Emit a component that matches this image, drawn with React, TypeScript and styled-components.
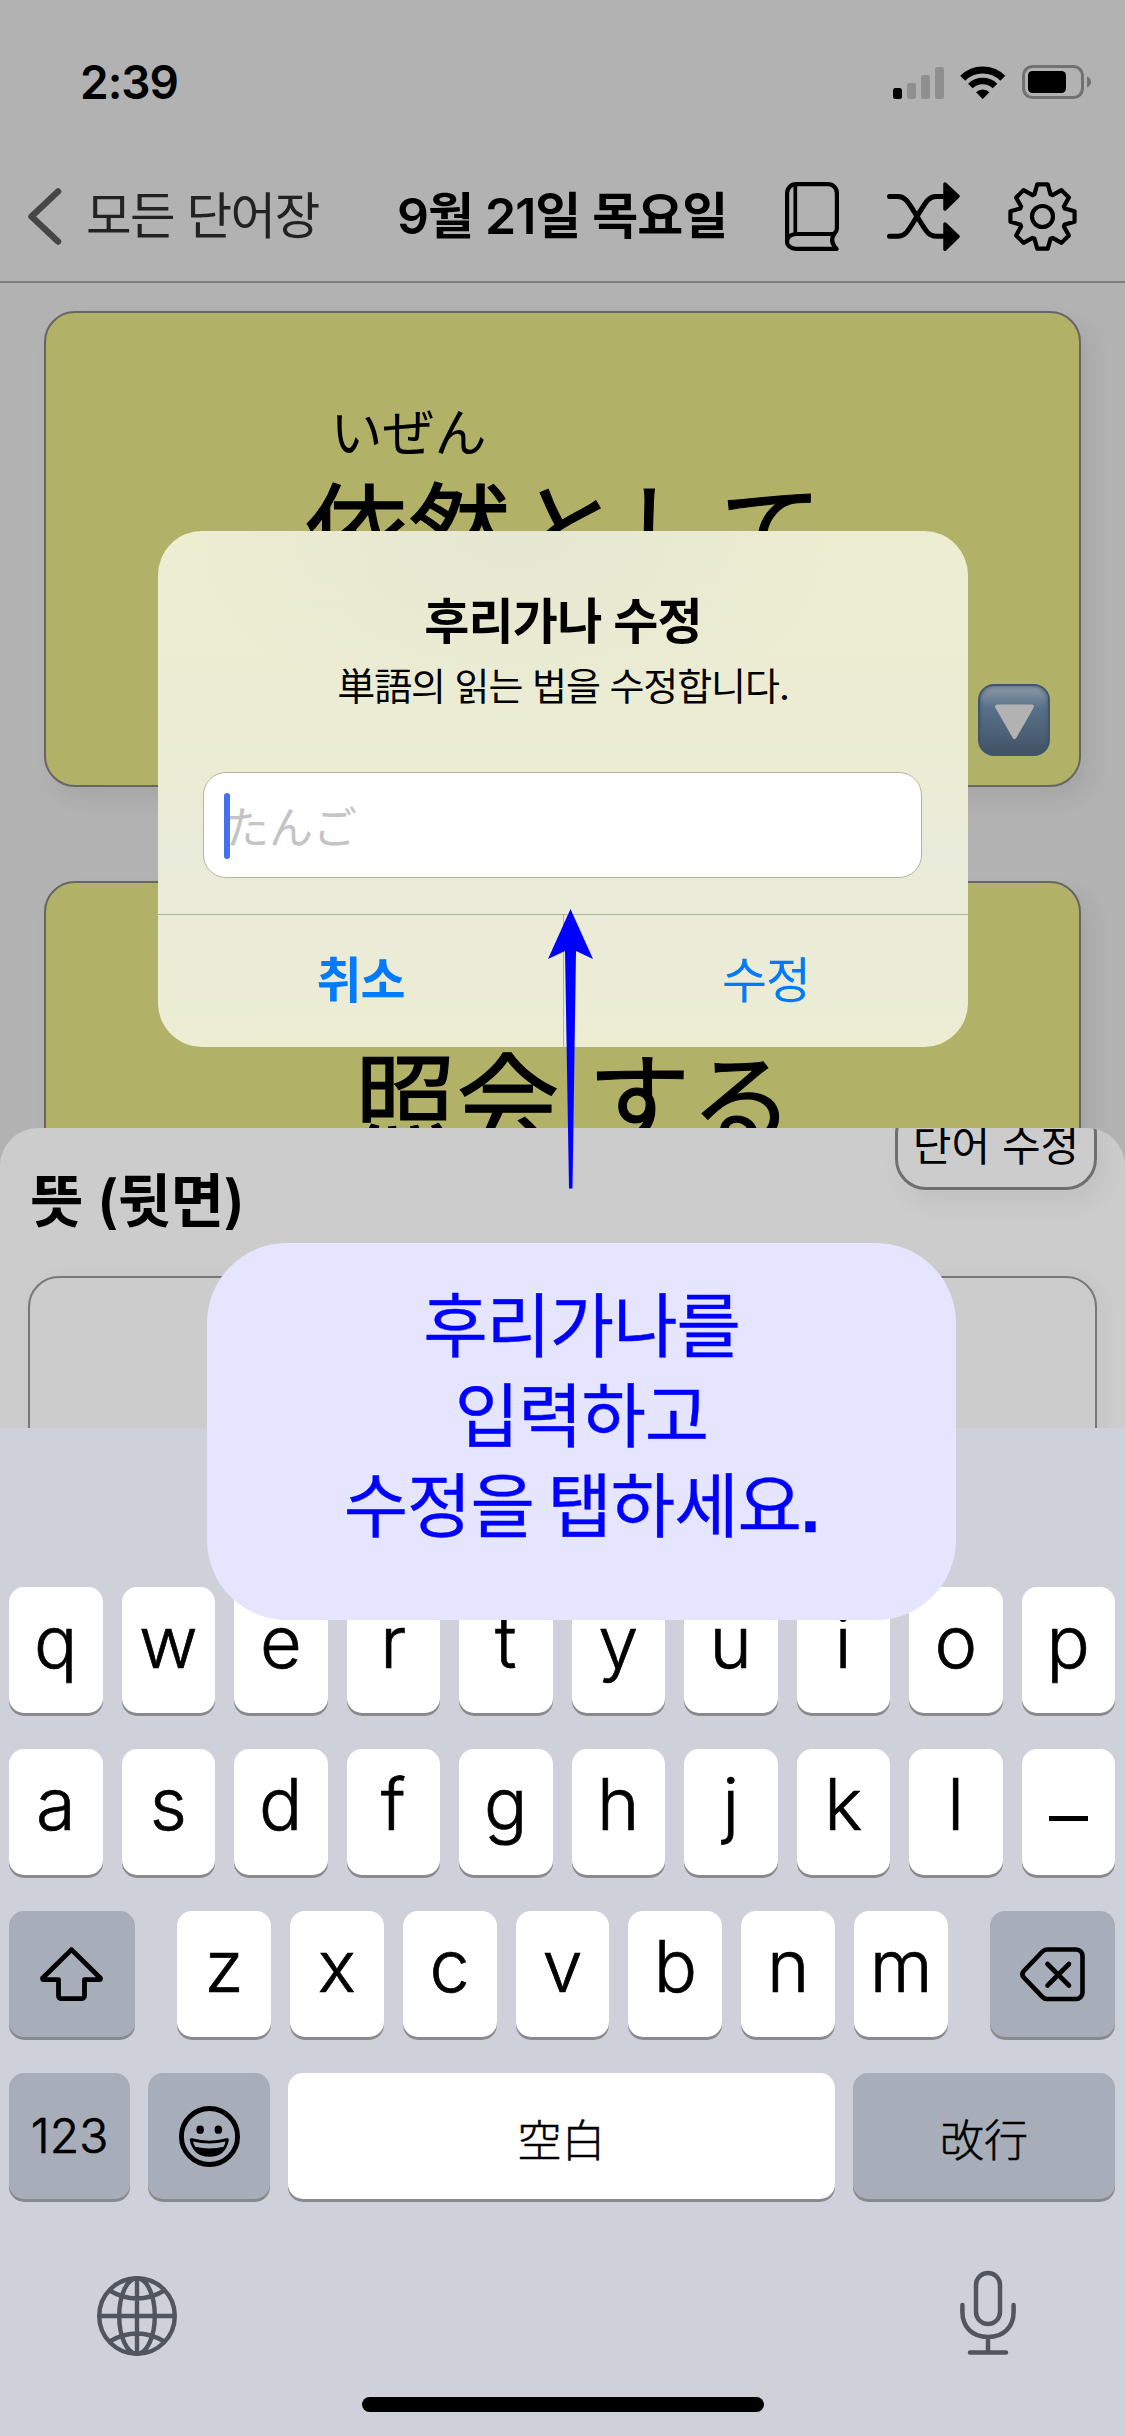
import React from "react";
import styled, { createGlobalStyle } from "styled-components";

const KR = `Inter, "Noto Sans CJK KR", sans-serif`;
const JP = `"Noto Sans CJK JP", sans-serif`;

const GlobalStyle = createGlobalStyle`
  *, *::before, *::after { box-sizing: border-box; }
  body { margin: 0; background: #b2b2b2; }
`;

const Screen = styled.main`
  position: relative;
  display: flex;
  flex-direction: column;
  width: 1125px;
  height: 2436px;
  overflow: hidden;
  background: #b2b2b2;
  color: #000;
  font-family: ${KR};
  white-space: nowrap;
`;

const StatusBar = styled.header`
  display: flex;
  align-items: center;
  justify-content: space-between;
  height: 164px;
  padding: 0 34px 0 80px;
`;

const Clock = styled.span`
  font-size: 46px;
  font-weight: 600;
  line-height: 56px;
  letter-spacing: -1px;
`;

const StatusIcons = styled.div`
  display: flex;
  align-items: center;
  gap: 16px;
`;

const NavBar = styled.nav`
  display: flex;
  align-items: center;
  height: 119px;
  padding: 0 48px 13px 28px;
  border-bottom: 2px solid #7f7f7f;
`;

const BackButton = styled.div`
  display: flex;
  align-items: center;
  gap: 24px;
  width: 369px;
  font-size: 49.5px;
  line-height: 60px;
  letter-spacing: -0.03em;
  color: #222;
`;

const NavTitle = styled.h1`
  flex: 1;
  margin: 0;
  font-size: 50px;
  font-weight: 600;
  line-height: 60px;
  letter-spacing: -0.018em;
`;

const NavActions = styled.div`
  display: flex;
  align-items: center;
  gap: 48px;
`;

const CardList = styled.section`
  display: flex;
  flex-direction: column;
  gap: 94px;
  height: 845px;
  padding: 28px 44px 0;
  overflow: hidden;
`;

const Card = styled.article`
  position: relative;
  display: flex;
  flex: none;
  justify-content: center;
  align-items: flex-start;
  height: 476px;
  padding-top: 87px;
  border: 2px solid #666664;
  border-radius: 31px;
  background: #b1b168;
  box-shadow: 10px 12px 22px rgba(0, 0, 0, 0.07);
`;

const Word = styled.div<{ $gap: number; $shift: number }>`
  display: flex;
  align-items: flex-end;
  gap: ${(p) => p.$gap}px;
  margin-left: ${(p) => p.$shift}px;
  font-family: ${JP};
  font-size: 103px;
  line-height: 103px;
  font-weight: 400;
`;

const Ruby = styled.div`
  display: flex;
  flex-direction: column;
  align-items: center;
`;

const Reading = styled.span`
  height: 60px;
  margin-bottom: 14px;
  font-size: 52px;
  line-height: 60px;
`;

const Base = styled.span`
  -webkit-text-stroke: 1px #000;
`;

const FlipButton = styled.div`
  position: absolute;
  right: 29px;
  bottom: 29px;
  display: flex;
  width: 72px;
  height: 72px;
  border: 2px solid #3f566e;
  border-radius: 16px;
  background: linear-gradient(#8d98a2 0%, #77899a 14%, #587089 32%, #50657c 60%, #425265 100%);
  box-shadow: inset 0 0 4px #3f5870;
`;

const SheetArea = styled.section`
  height: 300px;
  background: #b2b2b2;
`;

const Sheet = styled.div`
  height: 300px;
  padding: 0 28px;
  overflow: hidden;
  border-radius: 38px 38px 0 0;
  background: #ccc;
`;

const SheetHeader = styled.div`
  display: flex;
  justify-content: space-between;
  align-items: flex-start;
  height: 148px;
`;

const SheetTitle = styled.h2`
  margin: 43px 0 0 2px;
  font-size: 58px;
  font-weight: 600;
  line-height: 60px;
  letter-spacing: -0.01em;
`;

const EditButton = styled.div`
  width: 202px;
  height: 87px;
  margin-top: -25px;
  border: 3px solid #6d6e70;
  border-radius: 31px;
  font-size: 42px;
  line-height: 80px;
  text-align: center;
  box-shadow: 8px 14px 24px rgba(0, 0, 0, 0.05);
`;

const MeaningBox = styled.div`
  height: 220px;
  border: 2px solid #77787a;
  border-radius: 31px;
  box-shadow: 6px 0 18px rgba(0, 0, 0, 0.04);
`;

const Keyboard = styled.section`
  display: flex;
  flex: 1;
  flex-direction: column;
  padding-top: 159px;
  background: #cfd1da;
`;

const KeyRows = styled.div`
  display: flex;
  flex-direction: column;
  gap: 36px;
  padding: 0 10px 0 9px;
`;

const KeyRow = styled.div<{ $gap?: number }>`
  display: flex;
  gap: ${(p) => p.$gap ?? 19}px;
`;

const LetterGroup = styled.div`
  display: flex;
  flex: 1;
  gap: 19px;
  margin: 0 23px;
`;

const Key = styled.div<{ $tone?: "light" | "dark"; $width?: number }>`
  display: flex;
  align-items: center;
  justify-content: center;
  flex: ${(p) => (p.$width ? `0 0 ${p.$width}px` : "1 1 0")};
  height: 126px;
  border-radius: 15px;
  background: ${(p) => (p.$tone === "dark" ? "#a7adb9" : "#fff")};
  box-shadow: 0 3px 0 #898a8e;
`;

const Letter = styled.span`
  padding-bottom: 16px;
  font-size: 72px;
  font-weight: 300;
  line-height: 80px;
  -webkit-text-stroke: 0.7px #000;
`;

const LongDash = styled.span`
  width: 39px;
  height: 5px;
  margin-top: 12px;
  background: #000;
`;

const NumericLabel = styled.span`
  font-size: 48px;
  font-weight: 300;
  line-height: 60px;
  -webkit-text-stroke: 0.7px #000;
`;

const KanaLabel = styled.span`
  padding-top: 4px;
  font-family: ${JP};
  font-size: 44px;
  font-weight: 300;
  line-height: 60px;
  -webkit-text-stroke: 0.5px #000;
`;

const KeyboardFooter = styled.div`
  display: flex;
  align-items: flex-end;
  justify-content: space-between;
  height: 86px;
  margin-top: 71px;
  padding: 0 109px 0 97px;
`;

const HomeIndicator = styled.div`
  width: 402px;
  height: 15px;
  margin: 41px 0 0 362px;
  border-radius: 8px;
  background: #000;
`;

const Dialog = styled.div`
  position: absolute;
  left: 158px;
  top: 531px;
  display: flex;
  flex-direction: column;
  width: 810px;
  height: 516px;
  overflow: hidden;
  border-radius: 44px;
  background:
    radial-gradient(ellipse 330px 190px at 44% 0%, #e5e7d2, rgba(229, 231, 210, 0)),
    linear-gradient(#ecedd1 0%, #ebecd4 45%, #e9ebda 62%, #ebebd8 78%, #ecedd3 100%);
  text-align: center;
`;

const DialogTitle = styled.h2`
  flex: none;
  margin: 61px 0 0;
  font-size: 49px;
  font-weight: 600;
  line-height: 60px;
  letter-spacing: -0.015em;
`;

const DialogMessage = styled.p`
  flex: none;
  margin: 9px 0 0;
  font-size: 38px;
  line-height: 50px;
  letter-spacing: -0.028em;
`;

const TextField = styled.div`
  display: flex;
  flex: none;
  align-items: center;
  width: 719px;
  height: 106px;
  margin: 61px 0 0 45px;
  padding-left: 20px;
  border: 1.5px solid #b5b695;
  border-radius: 23px;
  background: #fff;
`;

const Caret = styled.span`
  z-index: 1;
  width: 6px;
  height: 66px;
  margin: 2px -5px 0 0;
  border-radius: 3px;
  background: #466fef;
`;

const Placeholder = styled.span`
  font-family: ${JP};
  font-size: 44px;
  line-height: 60px;
  color: #c4c4c6;
`;

const DialogActions = styled.div`
  display: flex;
  flex: 1;
  margin-top: 36px;
  border-top: 1.5px solid #b2b38f;
`;

const DialogButton = styled.div<{ $strong?: boolean }>`
  flex: 0 0 50%;
  font-size: 49px;
  font-weight: ${(p) => (p.$strong ? 600 : 400)};
  line-height: 132px;
  letter-spacing: -0.02em;
  color: #007aff;

  & + & {
    border-left: 1.5px solid #b2b38f;
  }
`;

const Callout = styled.div`
  position: absolute;
  left: 207px;
  top: 1243px;
  width: 749px;
  height: 377px;
  padding-top: 39px;
  border-radius: 80px;
  background: #e5e5ff;
  color: #00f;
  font-size: 70px;
  line-height: 90px;
  letter-spacing: -0.015em;
  word-spacing: -5px;
  text-align: center;
  white-space: pre-line;
  -webkit-text-stroke: 0.4px #00f;
`;

const FullStop = styled.span`
  font-family: "Liberation Sans", Arial, sans-serif;
  font-weight: 700;
`;

const Arrow = styled.svg`
  position: absolute;
  left: 548px;
  top: 909px;
`;

const gearPoints = Array.from({ length: 8 }, (_, tooth) => {
  const at = (deg: number, r: number) => {
    const a = (deg * Math.PI) / 180;
    return `${(34.5 + r * Math.sin(a)).toFixed(2)},${(34.5 - r * Math.cos(a)).toFixed(2)}`;
  };
  const c = tooth * 45;
  return [at(c - 9.3, 32.5), at(c + 9.3, 32.5), at(c + 20, 23.6), at(c + 25, 23.6)].join(" ");
}).join(" ");

const SignalIcon = () => (
  <svg width="51" height="33" viewBox="0 0 51 33">
    <rect x="0" y="22" width="9" height="11" rx="2.5" />
    <g fill="#8f8f8f">
      <rect x="14" y="17" width="9" height="16" rx="2.5" />
      <rect x="28" y="9" width="9" height="24" rx="2.5" />
      <rect x="42" y="1" width="9" height="32" rx="2.5" />
    </g>
  </svg>
);

const WifiIcon = () => (
  <svg width="46" height="33" viewBox="0 0 46 33" fill="none" stroke="#000">
    <path d="M2.7 12.2a28.4 28.4 0 0 1 40.1 0" strokeWidth="7" />
    <path d="M10.4 20a17.6 17.6 0 0 1 24.6 0" strokeWidth="6.6" />
    <path d="M22.7 33l-6.7-6.8a9.6 9.6 0 0 1 13.4 0z" fill="#000" stroke="none" />
  </svg>
);

const BatteryIcon = () => (
  <svg width="69" height="34" viewBox="0 0 69 34">
    <rect x="1.5" y="1.5" width="59" height="31" rx="9" fill="none" stroke="#717171" strokeWidth="3" />
    <rect x="6" y="6" width="38" height="22" rx="4.5" />
    <path d="M65 11.5q4 1.8 4 5.500t-4 5.500z" fill="#717171" />
  </svg>
);

const ChevronIcon = () => (
  <svg width="34" height="57" viewBox="0 0 34 57" fill="none" stroke="#464646" strokeWidth="6.500" strokeLinecap="round" strokeLinejoin="round">
    <path d="M30 3.500L3.500 28.500L30 53.500" />
  </svg>
);

const BookIcon = () => (
  <svg width="54" height="69" viewBox="0 0 54 69" fill="none" stroke="#000" strokeWidth="4.200" strokeLinecap="round" strokeLinejoin="round">
    <path d="M2.100 60V11a9 9 0 0 1 9-8.900H43a8.900 8.900 0 0 1 8.900 8.900V46.500q0 2.500-2.500 5Q44 59 51.500 66.900H11a9 7.400 0 0 1 0-14.900H49.500" />
    <path d="M10.300 3V52" strokeWidth="3.700" strokeLinecap="butt" />
  </svg>
);

const ShuffleIcon = () => (
  <svg width="73" height="69" viewBox="0 0 73 69" stroke="#000" strokeWidth="5" strokeLinecap="round" strokeLinejoin="round">
    <g fill="none">
      <path d="M2.500 14.500H11C18.500 14.500 21 20 30 34.300C39 49 41.500 54.300 49 54.300H58" />
      <path d="M2.500 54.300H11C18.500 54.300 21 49 30 34.300C39 20 41.500 14.500 49 14.500H58" />
    </g>
    <path d="M58 2L71 14.300L58 27z" strokeWidth="3.500" />
    <path d="M58 42L71 54.600L58 67.200z" strokeWidth="3.500" />
  </svg>
);

const GearIcon = () => (
  <svg width="69" height="69" viewBox="0 0 69 69" fill="none" stroke="#000" strokeWidth="4.200" strokeLinejoin="round">
    <polygon points={gearPoints} />
    <circle cx="34.500" cy="34.500" r="10.500" />
  </svg>
);

const FlipTriangle = () => (
  <svg width="68" height="68" viewBox="2 2 68 68">
    <path d="M19 22.500H54L36.500 53z" fill="#b2b2b2" stroke="#b2b2b2" strokeWidth="4" strokeLinejoin="round" />
  </svg>
);

const ShiftIcon = () => (
  <svg width="65" height="55" viewBox="0 0 65 55" fill="none" stroke="#000" strokeWidth="4.800" strokeLinejoin="round">
    <path d="M31.500 2.600L60.500 31.200Q60.500 32.600 59.500 32.600H44.500V48.700a3 3 0 0 1-3 3H21.500a3 3 0 0 1-3-3V32.600H3.500Q2.500 32.600 2.500 31.200z" />
  </svg>
);

const DeleteIcon = () => (
  <svg width="65" height="55" viewBox="0 0 65 55" fill="none" stroke="#000" strokeWidth="4.600" strokeLinecap="round" strokeLinejoin="round">
    <path d="M27 2.500H56a6.500 6.500 0 0 1 6.500 6.500V45.500a6.500 6.500 0 0 1-6.500 6.500H27q-2.500 0-4.500-2L3.800 30.500q-2.800-3.200 0-6.500L22.500 4.500q2-2 4.500-2z" />
    <path d="M27.500 17L49 38.500M49 17L27.500 38.500" />
  </svg>
);

const SmileIcon = () => (
  <svg width="61" height="61" viewBox="0 0 60 60">
    <circle cx="30" cy="30" r="27.600" fill="none" stroke="#000" strokeWidth="4.800" />
    <ellipse cx="20.800" cy="23.300" rx="3.700" ry="4.100" />
    <ellipse cx="38.700" cy="23.300" rx="3.700" ry="4.100" />
    <path d="M10.500 33.500Q10.300 31 13 31.800Q30 36.500 46.500 31.800Q49.400 31 49 33.500Q46 50 30 50Q14 50 10.500 33.500z" />
    <path d="M13.800 34.800Q30 39 45.700 34.800Q45.300 38 43.900 40.200Q30 43.300 15.900 40.200Q14.500 38 13.800 34.800z" fill="#a7adb9" />
  </svg>
);

const GlobeIcon = () => (
  <svg width="80" height="80" viewBox="0 0 80 80" fill="none" stroke="#50555f" strokeWidth="4.400">
    <circle cx="40" cy="40" r="37.800" />
    <ellipse cx="40" cy="40" rx="17.800" ry="37.800" />
    <path d="M40 2V78M2 40H78M12.500 14.500Q40 30.500 67.500 14.500M12.500 65.500Q40 49.500 67.500 65.500" />
  </svg>
);

const MicIcon = () => (
  <svg width="56" height="86" viewBox="0 0 56 86" fill="none" stroke="#50555f" strokeWidth="4.500" strokeLinecap="round">
    <rect x="16" y="3" width="24" height="51" rx="12" />
    <path d="M2.400 35V42C2.400 57 12.500 67 28 67S53.600 57 53.600 42V35M28 67V82M10 82.500H46" />
  </svg>
);

const Letters = ({ keys }: { keys: string }) => (
  <>
    {keys.split("").map((k) => (
      <Key key={k}>
        <Letter>{k}</Letter>
      </Key>
    ))}
  </>
);

export default function App() {
  return (
    <>
      <GlobalStyle />
      <Screen>
        <StatusBar>
          <Clock>2:39</Clock>
          <StatusIcons>
            <SignalIcon />
            <WifiIcon />
            <BatteryIcon />
          </StatusIcons>
        </StatusBar>

        <NavBar>
          <BackButton>
            <ChevronIcon />
            모든 단어장
          </BackButton>
          <NavTitle>9월 21일 목요일</NavTitle>
          <NavActions>
            <BookIcon />
            <ShuffleIcon />
            <GearIcon />
          </NavActions>
        </NavBar>

        <CardList>
          <Card>
            <Word $gap={5} $shift={3}>
              <Ruby>
                <Reading>いぜん</Reading>
                <Base>依然</Base>
              </Ruby>
              <Base>として</Base>
            </Word>
            <FlipButton>
              <FlipTriangle />
            </FlipButton>
          </Card>
          <Card>
            <Word $gap={28} $shift={22}>
              <Ruby>
                <Reading />
                <Base>照会</Base>
              </Ruby>
              <Base>する</Base>
            </Word>
          </Card>
        </CardList>

        <SheetArea>
          <Sheet>
            <SheetHeader>
              <SheetTitle>뜻 (뒷면)</SheetTitle>
              <EditButton>단어 수정</EditButton>
            </SheetHeader>
            <MeaningBox />
          </Sheet>
        </SheetArea>

        <Keyboard>
          <KeyRows>
            <KeyRow>
              <Letters keys="qwertyuiop" />
            </KeyRow>
            <KeyRow>
              <Letters keys="asdfghjkl" />
              <Key>
                <LongDash />
              </Key>
            </KeyRow>
            <KeyRow>
              <Key $tone="dark" $width={126}>
                <ShiftIcon />
              </Key>
              <LetterGroup>
                <Letters keys="zxcvbnm" />
              </LetterGroup>
              <Key $tone="dark" $width={125}>
                <DeleteIcon />
              </Key>
            </KeyRow>
            <KeyRow $gap={18}>
              <Key $tone="dark" $width={121}>
                <NumericLabel>123</NumericLabel>
              </Key>
              <Key $tone="dark" $width={122}>
                <SmileIcon />
              </Key>
              <Key>
                <KanaLabel>空白</KanaLabel>
              </Key>
              <Key $tone="dark" $width={262}>
                <KanaLabel>改行</KanaLabel>
              </Key>
            </KeyRow>
          </KeyRows>
          <KeyboardFooter>
            <GlobeIcon />
            <MicIcon />
          </KeyboardFooter>
          <HomeIndicator />
        </Keyboard>

        <Dialog>
          <DialogTitle>후리가나 수정</DialogTitle>
          <DialogMessage>単語의 읽는 법을 수정합니다.</DialogMessage>
          <TextField>
            <Caret />
            <Placeholder>たんご</Placeholder>
          </TextField>
          <DialogActions>
            <DialogButton $strong>취소</DialogButton>
            <DialogButton>수정</DialogButton>
          </DialogActions>
        </Dialog>

        <Arrow width="46" height="280" viewBox="0 0 46 280">
          <path d="M22.500 0L45 50L28 42L24.500 279.500H21L17 42L0 50z" fill="#00f" />
        </Arrow>

        <Callout>
          {"후리가나를\n입력하고\n수정을 탭하세요"}
          <FullStop>.</FullStop>
        </Callout>
      </Screen>
    </>
  );
}
